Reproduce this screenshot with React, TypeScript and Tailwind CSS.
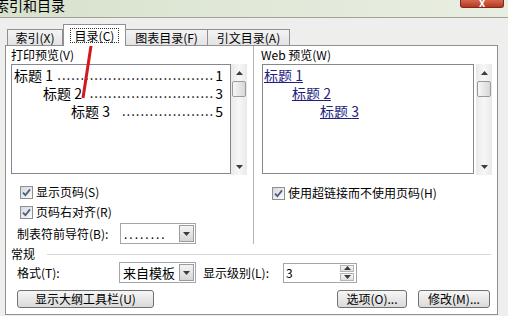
import React from "react";

function Check() {
  return (
    <span className="w-[13px] h-[13px] border border-[#8e8f8f] bg-linear-to-br from-[#d6d8da] to-[#fbfbfb] flex items-center justify-center shrink-0">
      <svg width="9" height="9" viewBox="0 0 9 9">
        <path d="M1 4.6 L3.4 7.2 L8 1.4" stroke="#4a5d86" strokeWidth="1.8" fill="none" />
      </svg>
    </span>
  );
}

function Tri({ up }: { up?: boolean }) {
  return (
    <svg width="7" height="4" viewBox="0 0 7 4">
      <path d={up ? "M0 4 L3.5 0 L7 4 Z" : "M0 0 L7 0 L3.5 4 Z"} fill="#3c3c3c" />
    </svg>
  );
}

function Scrollbar() {
  return (
    <div className="w-[16px] h-[111px] bg-linear-to-r from-[#e9e9e9] via-[#f7f7f7] to-[#e9e9e9] flex flex-col items-center">
      <div className="h-[17px] w-full flex items-center justify-center">
        <Tri up />
      </div>
      <div className="w-[14px] h-[16px] border border-[#9a9a9a] rounded-[2px] bg-linear-to-r from-[#f6f6f6] to-[#d8d8d8]" />
      <div className="flex-1" />
      <div className="h-[17px] w-full flex items-center justify-center">
        <Tri />
      </div>
    </div>
  );
}

function Combo({ text, className }: { text: string; className: string }) {
  return (
    <div className={`h-[21px] border border-[#a3a7ad] bg-white flex items-stretch ${className}`}>
      <span className="flex-1 pl-[3px] leading-[19px] whitespace-nowrap">{text}</span>
      <span className="w-[15px] my-[1px] mr-[1px] border border-[#9c9c9c] bg-linear-to-b from-[#f4f4f4] to-[#d6d6d6] flex items-center justify-center">
        <Tri />
      </span>
    </div>
  );
}

function Btn({ children, className }: { children: React.ReactNode; className: string }) {
  return (
    <div className={`h-[18px] border border-[#707070] rounded-[3px] bg-linear-to-b from-[#f6f6f6] to-[#dadada] flex items-center justify-center ${className}`}>
      {children}
    </div>
  );
}

const printRows = [
  { pl: "pl-[2px]", n: 1, p: 1, d: 34 },
  { pl: "pl-[31px]", n: 2, p: 3, d: 27 },
  { pl: "pl-[59px]", n: 3, p: 5, d: 20 },
];

const webRows = [
  { pl: "pl-[1px]", n: 1 },
  { pl: "pl-[29px]", n: 2 },
  { pl: "pl-[57px]", n: 3 },
];

export default function App() {
  return (
    <div className="relative w-[508px] h-[316px] overflow-hidden bg-[#eeefed] text-[12px] text-black font-['Noto_Sans_CJK_SC','Noto_Sans',sans-serif]">
      {/* title bar */}
      <div className="h-[18px] border-b border-[#9ea596] bg-linear-to-r from-[#d7e1cc] via-[#e1e8d8] to-[#e9eee2] flex items-start justify-between">
        <span className="-ml-[5px] -mt-[3px] text-[14px] leading-[16px]">索引和目录</span>
        <div className="mr-[4px] w-[44px] h-[8px] rounded-b-[3px] bg-linear-to-b from-[#d2684f] to-[#b8361f] border border-t-0 border-[#7d2a1c] flex justify-center overflow-hidden">
          <span className="text-white text-[11px] leading-[4px] font-bold">x</span>
        </div>
      </div>

      <div className="pl-[5px] pr-[10px]">
        {/* tabs */}
        <div className="h-[27px] flex items-end pl-[2px]">
          <div className="w-[56px] h-[16px] border border-b-0 border-[#8e9096] bg-linear-to-b from-[#f4f4f4] to-[#e3e3e3] flex items-center justify-center leading-[14px]">
            索引(X)
          </div>
          <div className="relative z-10 -mb-[1px] w-[63px] h-[22px] border border-b-0 border-[#8e9096] bg-white flex items-start justify-center pt-[3px]">
            <span className="border border-dotted border-[#333] px-[4px] leading-[13px]">目录(C)</span>
          </div>
          <div className="w-[82px] h-[16px] border border-b-0 border-l-0 border-[#8e9096] bg-linear-to-b from-[#f4f4f4] to-[#e3e3e3] flex items-center justify-center leading-[14px]">
            图表目录(F)
          </div>
          <div className="w-[82px] h-[16px] border border-b-0 border-l-0 border-[#8e9096] bg-linear-to-b from-[#f4f4f4] to-[#e3e3e3] flex items-center justify-center leading-[14px]">
            引文目录(A)
          </div>
        </div>

        {/* panel */}
        <div className="h-[270px] border border-[#8e9096] bg-white flex flex-col">
          <div className="flex">
            {/* left column */}
            <div className="w-[247px] pl-[5px]">
              <div className="h-[18px] leading-[18px]">打印预览(V)</div>
              <div className="flex">
                <div className="w-[220px] h-[110px] border border-[#828790] bg-white pt-[1px] pr-[7px]">
                  {printRows.map((r) => (
                    <div key={r.n} className={`flex items-center h-[18px] leading-[16px] text-[14px] ${r.pl}`}>
                      <span className="whitespace-pre shrink-0">标题 {r.n}</span>
                      <span className="flex-1 min-w-0 text-right whitespace-nowrap text-[13px] tracking-[1px]">{".".repeat(r.d)}</span>
                      <span className="pl-[1px] shrink-0">{r.p}</span>
                    </div>
                  ))}
                </div>
                <Scrollbar />
              </div>
              <div className="mt-[7px] h-[20px] flex items-center pl-[9px] gap-[3px]">
                <Check />
                <span>显示页码(S)</span>
              </div>
              <div className="h-[20px] flex items-center pl-[9px] gap-[3px]">
                <Check />
                <span>页码右对齐(R)</span>
              </div>
              <div className="mt-[1px] h-[21px] flex items-center pl-[6px]">
                <span className="w-[103px]">制表符前导符(B):</span>
                <Combo text="........" className="w-[76px] tracking-[2px]" />
              </div>
            </div>

            {/* right column */}
            <div className="flex-1 border-l border-[#b5b5b5] pl-[8px]">
              <div className="h-[18px] leading-[18px] -ml-[1px]">Web 预览(W)</div>
              <div className="flex">
                <div className="w-[212px] h-[110px] border border-[#828790] bg-white pt-[1px]">
                  {webRows.map((r) => (
                    <div key={r.n} className={`flex items-center h-[18px] leading-[16px] text-[14px] ${r.pl}`}>
                      <span className="whitespace-pre underline text-[#1e1e80]">标题 {r.n}</span>
                    </div>
                  ))}
                </div>
                <div className="ml-[2px]">
                  <Scrollbar />
                </div>
              </div>
              <div className="mt-[8px] h-[20px] flex items-center pl-[10px] gap-[3px]">
                <Check />
                <span>使用超链接而不使用页码(H)</span>
              </div>
            </div>
          </div>

          {/* general */}
          <div className="mt-[2px] h-[15px] flex items-center pl-[5px] pr-[6px]">
            <span className="leading-[15px]">常规</span>
            <span className="flex-1 ml-[12px] mt-[2px] border-t border-[#d8d8d8]" />
          </div>
          <div className="mt-[1px] h-[21px] flex items-center pl-[11px]">
            <span className="w-[102px]">格式(T):</span>
            <Combo text="来自模板" className="w-[77px] text-[13px]" />
            <span className="ml-[7px] w-[80px]">显示级别(L):</span>
            <div className="w-[74px] h-[20px] border border-[#a3a7ad] bg-white flex items-center">
              <span className="flex-1 pl-[2px] leading-[18px]">3</span>
              <div className="w-[14px] h-[16px] mr-[2px] flex flex-col gap-[1px]">
                <div className="flex-1 border border-[#b4b4b4] bg-linear-to-b from-[#f6f6f6] to-[#e0e0e0] flex items-center justify-center">
                  <Tri up />
                </div>
                <div className="flex-1 border border-[#b4b4b4] bg-linear-to-b from-[#f6f6f6] to-[#e0e0e0] flex items-center justify-center">
                  <Tri />
                </div>
              </div>
            </div>
          </div>
          <div className="mt-[7px] flex items-center pl-[11px]">
            <Btn className="w-[137px]">显示大纲工具栏(U)</Btn>
            <div className="flex-1" />
            <Btn className="w-[70px]">选项(O)...</Btn>
            <Btn className="ml-[11px] mr-[7px] w-[72px]">修改(M)...</Btn>
          </div>
        </div>
      </div>

      {/* red annotation arrow */}
      <svg className="absolute inset-0 pointer-events-none" width="508" height="316" viewBox="0 0 508 316">
        <line x1="83" y1="98" x2="91.6" y2="42" stroke="#d4181c" strokeWidth="3" />
        <polygon points="94,27 97,46 86.5,44.5" fill="#d4181c" />
      </svg>
    </div>
  );
}
